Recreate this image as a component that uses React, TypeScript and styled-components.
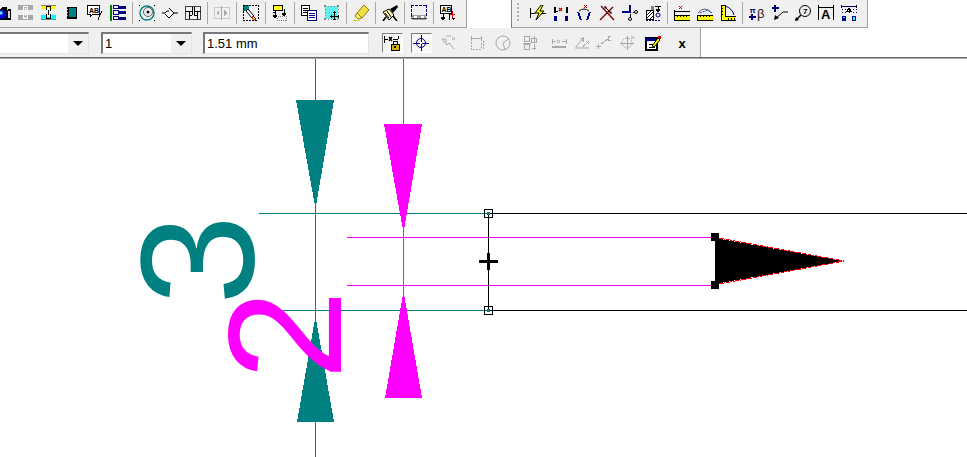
import React from "react";
import styled, { createGlobalStyle } from "styled-components";

const NAVY = "#000080";
const TEAL = "#008080";
const MAROON = "#800000";
const YELLOW = "#ffff00";
const CYAN = "#00ffff";
const OFF = "#a8a8a8";
const PINK = "#ff00ff";

const GlobalStyle = createGlobalStyle`
  html, body {
    margin: 0;
    padding: 0;
    background: #fff;
    overflow: hidden;
    font-family: "Liberation Sans", Arial, sans-serif;
  }
`;

const Page = styled.div`
  width: 967px;
  height: 457px;
  display: flex;
  flex-direction: column;
  overflow: hidden;
`;

const TopRow = styled.div`
  display: flex;
  height: 28px;
`;

const Toolbar = styled.div<{ $width: number }>`
  display: flex;
  align-items: center;
  width: ${(p) => p.$width}px;
  box-sizing: border-box;
  height: 100%;
  padding-bottom: 1px;
  background: #f0f0f0;
  border-bottom: 1px solid #a0a0a0;
  border-right: 1px solid #a0a0a0;
`;

const RightToolbar = styled(Toolbar)`
  margin-left: 44px;
  border-left: 1px solid #808080;
`;

const Grip = styled.div`
  width: 2px;
  height: 20px;
  margin: 0 7px 0 5px;
  background: repeating-linear-gradient(to bottom, #b0b0b0 0 2px, transparent 2px 4px);
`;

const Btn = styled.div<{ $width?: number }>`
  flex: none;
  width: ${(p) => p.$width ?? 23}px;
  height: 22px;
  display: flex;
  align-items: center;
  justify-content: center;
`;

const CutBtn = styled.div`
  flex: none;
  width: 14.5px;
  height: 22px;
  display: flex;
  align-items: center;
  justify-content: flex-end;
  padding-right: 3.5px;
  box-sizing: border-box;
  overflow: hidden;

  svg {
    flex: none;
  }
`;

const Sep = styled.div`
  flex: none;
  width: 6px;
  height: 22px;
  display: flex;
  justify-content: center;

  &::after {
    content: "";
    width: 1px;
    background: #a8a8a8;
  }
`;

const SecondRow = styled.div`
  width: 701px;
  height: 29px;
  box-sizing: border-box;
  padding-top: 1px;
  display: flex;
  align-items: center;
  background: #f0f0f0;
  border-right: 1px solid #a0a0a0;
`;

const Field = styled.div<{ $width: number; $gap: number }>`
  flex: none;
  width: ${(p) => p.$width}px;
  height: 22px;
  margin-left: ${(p) => p.$gap}px;
  box-sizing: border-box;
  display: flex;
  align-items: stretch;
  background: #fff;
  border-top: 2px solid #787878;
  border-left: 2px solid #787878;
  border-right: 1px solid #e4e4e4;
  border-bottom: 1px solid #e4e4e4;
  font-size: 13px;
  line-height: 18px;
  color: #000;
`;

const CutField = styled(Field)`
  border-left: none;
`;

const FieldText = styled.span`
  flex: 1;
  padding: 1px 0 0 2px;
  white-space: nowrap;
`;

const DropBtn = styled.div`
  flex: none;
  width: 20px;
  background: #f0f0f0;
  display: flex;
  align-items: center;
  justify-content: center;

  &::after {
    content: "";
    border-left: 5px solid transparent;
    border-right: 5px solid transparent;
    border-top: 5px solid #000;
  }
`;

const IconGroup = styled.div`
  display: flex;
  align-items: center;
  margin-left: 9px;
`;

const Toggled = styled.div`
  width: 21px;
  height: 20px;
  box-sizing: border-box;
  display: flex;
  align-items: center;
  justify-content: center;
  border-top: 1px solid #808080;
  border-left: 1px solid #808080;
  border-right: 1px solid #fff;
  border-bottom: 1px solid #fff;
  background: repeating-conic-gradient(#ffffff 0 25%, #f0f0f0 0 50%) 0 0 / 2px 2px;
`;

const CloseMark = styled.span`
  font-size: 13px;
  font-weight: 700;
  color: #000;
`;

const Canvas = styled.div`
  flex: 1;
  min-height: 0;
  padding-top: 1px;
  border-top: 1px solid #686868;
  box-shadow: inset 0 1px 0 #a8a8a8;
  background: #fff;

  svg {
    display: block;
  }
`;

const Ico = ({ children }: { children: React.ReactNode }) => (
  <svg width="16" height="16" viewBox="0 0 16 16" shapeRendering="crispEdges" fill="none">
    {children}
  </svg>
);

const Tiny = ({ x, y, size, color, weight, children }: { x: number; y: number; size: number; color?: string; weight?: number; children: React.ReactNode }) => (
  <text x={x} y={y} fontSize={size} fontFamily="'Liberation Sans', sans-serif" fontWeight={weight ?? 700} fill={color ?? "#000"}>
    {children}
  </text>
);

const icons: Record<string, React.ReactNode> = {
  camera: (
    <>
      <path d="M3 4h3l1-2h5l1 2h3v11H3z" fill="#000" />
      <path d="M12 3h1v2h-1zM13 6h2v7h-2z" fill="#d0d0d0" />
      <circle cx="7" cy="9.5" r="4.5" fill="#0000d0" shapeRendering="auto" />
      <circle cx="6" cy="8" r="1.8" fill="#60e0ff" shapeRendering="auto" />
    </>
  ),
  linkGrey: (
    <>
      <path d="M0 0h15v5H0zM0 10h15v5H0z" fill="#a8a8a8" />
      <path d="M5 1h5v6H9V2H6v5H5zM5 8h1v5h3V8h1v6H5zM7 4h1v7H7z" fill="#fff" />
      <path d="M6 3h3v1H6zM6 12h3v1H6z" fill="#d8d8d8" />
    </>
  ),
  linkColor: (
    <>
      <path d="M0 0h15v4H0z" fill={YELLOW} />
      <path d="M0 10h15v5H0z" fill={CYAN} />
      <path d="M0 0h15v1H0zM0 14h15v1H0z" fill="#808080" />
      <path d="M5 1h5v5H9V2H6v3H5zM5 9h1v4h3V9h1v5H5zM7 4h1v7H7z" fill="#000" />
      <path d="M6 3h3v2H6zM6 10h3v2H6z" fill="#fff" />
    </>
  ),
  book: (
    <>
      <path d="M3 2h10v12H3z" fill="#000" />
      <path d="M5 3h7v9H5z" fill={TEAL} />
      <path d="M3 4h1v1H3zM3 7h1v1H3zM3 10h1v1H3z" fill="#c0c0c0" />
    </>
  ),
  abNote: (
    <>
      <path d="M0.5 0.5h12v9h-7l-2 2v-2h-3z" fill="#fff" stroke="#000" />
      <Tiny x={2} y={7.5} size={7}>AB</Tiny>
      <path d="M14 6h1v2h-1zM13 8h1v2h-1zM12 10h1v2h-1zM11 12h1v3h-1z" fill="#000" />
    </>
  ),
  list: (
    <>
      <path d="M0 0h2v16H0z" fill="#008000" />
      <path d="M3.5 0.5h5v3h-5zM3.5 5.5h5v4h-5zM3.5 11.5h5v3h-5z" stroke={NAVY} />
      <path d="M9 1h7v3H9zM9 6h7v3H9zM9 12h7v3H9z" fill={NAVY} />
    </>
  ),
  disc: (
    <>
      <circle cx="8" cy="8" r="7" stroke={TEAL} strokeWidth="1.4" shapeRendering="auto" />
      <circle cx="9" cy="7" r="4.5" stroke="#606060" shapeRendering="auto" />
      <circle cx="9" cy="7" r="1.5" fill="#000" shapeRendering="auto" />
      <path d="M0 0h1v1H0zM15 0h1v1h-1zM0 15h1v1H0zM15 15h1v1h-1z" fill="#000" />
    </>
  ),
  diode: (
    <path d="M0 8h3l2-2h2M7 3l5 5-5 5-4-4M12 8h4" stroke="#000" shapeRendering="auto" />
  ),
  table: (
    <>
      <path d="M0.5 1.5h15v13h-15z" stroke="#404040" />
      <path d="M0 6h7M9 6h7M4 6v8M12 6v8M7 2v8M9 2v8M4 10h3M9 10h3" stroke="#000" />
    </>
  ),
  splitOff: (
    <>
      <path d="M0.5 2.5h15v11h-15z" stroke="#c8c8c8" />
      <path d="M7 1h1v14H7z" fill={OFF} />
      <path d="M5 5v6L2 8zM10 5v6l3-3z" fill={OFF} />
    </>
  ),
  pencilBox: (
    <>
      <path d="M0 0h6v6H0z" fill={TEAL} />
      <path d="M0 0h15M0 15h15M0 0v15M15 0v15" stroke="#000" strokeDasharray="2 1" />
      <path d="M5 4l6 7-2 2-6-7z" fill="#fff" stroke="#000" shapeRendering="auto" />
      <path d="M10 11l3 3-1 1-3-2z" fill={YELLOW} stroke="#c00000" shapeRendering="auto" />
    </>
  ),
  moveBox: (
    <>
      <path d="M1 0h9v5H1z" fill={YELLOW} stroke="#000" />
      <path d="M3 6v7M1 10h4l-2 3zM12 4v7M10 8h4l-2 3z" stroke="#000" />
      <path d="M1 7h3" stroke="#000" />
      <path d="M5.5 11.5h9v4h-9z" stroke="#808080" strokeDasharray="1 1" />
    </>
  ),
  copy: (
    <>
      <path d="M0.5 0.5h8v10h-8z" fill="#fff" stroke="#000" />
      <path d="M2 3h5M2 5h5M2 7h5" stroke="#000" />
      <path d="M6.5 5.5h9v10h-9z" fill="#fff" stroke={NAVY} />
      <path d="M8 8h6M8 10h6M8 12h6" stroke={NAVY} />
    </>
  ),
  hatchMove: (
    <>
      <path d="M1 1h13v13H1z" fill="#60f0f0" />
      <path d="M1 1h13M1 14h13M1 1v13M14 1v13" stroke="#808080" strokeDasharray="1 2" />
      <path d="M0 0h2v2H0zM13 0h2v2h-2zM0 13h2v2H0z" fill="#808080" />
      <path d="M10 6v9M6 11h9" stroke="#000" />
      <path d="M9 7h3M9 14h3M7 10v3M14 10v3" stroke="#000" />
    </>
  ),
  marker: (
    <>
      <path d="M4 8l7-8 5 5-7 8z" fill="#f0e040" stroke="#908000" shapeRendering="auto" />
      <path d="M4 8l5 5-4 1-3-3z" fill="#fff070" stroke="#908000" shapeRendering="auto" />
      <path d="M0 15h7v1H0z" fill="#e0d000" />
    </>
  ),
  brush: (
    <>
      <path d="M1 7l6-3 5 6-5 5z" fill="#fff8b0" stroke="#000" shapeRendering="auto" />
      <path d="M3 8l4 5M5 6l4 6" stroke="#000" shapeRendering="auto" />
      <path d="M8 4l7-4 1 2-5 6z" fill="#000" shapeRendering="auto" />
      <path d="M1 16l3-4M15 16l-4-5" stroke="#000" strokeWidth="1.6" shapeRendering="auto" />
    </>
  ),
  printBox: (
    <>
      <path d="M0 0h16M0 11h16M0 0v11M15 0v11" stroke={NAVY} strokeDasharray="3 1" />
      <path d="M1 10h14v5H1z" fill="#a0a0a0" />
      <path d="M3 11h3v3H3zM10 11h3v3h-3z" fill="#fff" />
      <path d="M0 13h16" stroke="#404040" />
    </>
  ),
  abArrows: (
    <>
      <path d="M0.5 0.5h11v8h-11z" fill="#fff" stroke="#000" />
      <Tiny x={1.5} y={7} size={7}>AB</Tiny>
      <path d="M3 9v4M1 12h4l-2 3zM9 9v6" stroke="#000" />
      <path d="M12 6h1v7h-1zM10 9h5v1h-5z" fill="#e00000" />
      <path d="M12 13h3l-1.5 2z" fill="#000" />
    </>
  ),
  lockDim: (
    <>
      <path d="M0 1v7M14 1v3M0 4h4M9 4h5" stroke="#000" />
      <path d="M5 2l3 4M8 2L5 6" stroke="#000" strokeWidth="1.4" shapeRendering="auto" />
      <path d="M9 6h4v3H9z" stroke="#000" />
      <path d="M7 9h8v6H7z" fill="#d0b000" stroke="#000" />
      <path d="M10 11h2v2h-2z" fill="#000" />
    </>
  ),
  target: (
    <>
      <circle cx="8" cy="8" r="4.5" stroke={NAVY} shapeRendering="auto" />
      <path d="M8 0v16M0 8h16" stroke={NAVY} />
      <path d="M7 7h2v2H7z" fill="#fff" />
    </>
  ),
  offArrow: (
    <>
      <path d="M1 4h4v4M1 4l5 6 2-2 5 6" stroke={OFF} shapeRendering="auto" />
      <path d="M11 2l3 3M14 2l-3 3M5 1h5" stroke={OFF} shapeRendering="auto" />
    </>
  ),
  offBox: (
    <>
      <path d="M2 1v5M12 1v5M2 3h10" stroke={OFF} />
      <path d="M2 7v7h10V7M14 6v9" stroke={OFF} strokeDasharray="2 1" />
    </>
  ),
  offDial: (
    <>
      <circle cx="8" cy="8" r="7" stroke={OFF} shapeRendering="auto" />
      <path d="M8 8l7-5M8 8l2 7" stroke={OFF} shapeRendering="auto" />
      <path d="M10 0h6v5" fill="#f0f0f0" />
    </>
  ),
  offRows: (
    <>
      <path d="M2.5 1.5h5v5h-5zM2.5 9.5h5v5h-5zM9 3h5v4H9z" stroke={OFF} />
      <path d="M12 1v6M1 8h8M12 9v6M10 13h4" stroke={OFF} />
    </>
  ),
  offDim: (
    <>
      <path d="M1 4v5M15 4v5M1 6h4M11 6h4M6 5l3 3M9 5L6 8" stroke={OFF} />
      <path d="M1 11h14v2H1z" fill={OFF} />
    </>
  ),
  offAngle: (
    <>
      <path d="M1 13h14M2 12l7-9" stroke={OFF} shapeRendering="auto" />
      <path d="M9 3l-2 1 2 2zM12 6l3 3M15 6l-3 3M9 12l2-3" stroke={OFF} />
    </>
  ),
  offPlus: (
    <>
      <path d="M1 11h5M3 9v5M6 9l7-5" stroke={OFF} />
      <path d="M13 1h3v4h-3z" stroke={OFF} />
    </>
  ),
  offCross: (
    <>
      <circle cx="8" cy="8" r="5" stroke={OFF} strokeDasharray="2 1" shapeRendering="auto" />
      <path d="M8 1v14M1 8h14M12 1l3 3M15 1l-3 3" stroke={OFF} />
    </>
  ),
  noteEdit: (
    <>
      <path d="M1 3h11v12H1z" fill="#fff" stroke="#000" strokeWidth="1.2" />
      <path d="M1 3h10v3H1z" fill={NAVY} />
      <path d="M4 9h4M4 12h6" stroke="#000" />
      <path d="M7 11l6-8 2 2-6 7z" fill={YELLOW} stroke="#000" shapeRendering="auto" />
      <path d="M13 1h3v3h-2z" fill="#e00000" />
    </>
  ),
  bolt: (
    <>
      <path d="M0 3v10M16 3v10M0 8h5M12 8h4" stroke="#000" />
      <path d="M11 0L5 8h4l-3 7 8-9h-4l3-6z" fill={YELLOW} stroke="#000" shapeRendering="auto" />
    </>
  ),
  dimNavy: (
    <>
      <path d="M1 2h2v6H1zM13 2h2v6h-2z" fill="#000" />
      <path d="M1 6h14" stroke="#000" strokeDasharray="4 8" />
      <path d="M6 3l3 3M9 3L6 6" stroke="#c00000" strokeWidth="1.2" shapeRendering="auto" />
      <path d="M1 11h3v5H1zM12 11h3v5h-3z" fill={NAVY} />
    </>
  ),
  angleNavy: (
    <>
      <path d="M1 7l3 8h2L3 7zM15 7l-3 8h-2l3-8z" fill={NAVY} />
      <path d="M3 6q5-4 10 0" stroke="#000" shapeRendering="auto" />
      <path d="M8 0l3 3M11 0L8 3" stroke="#c00000" shapeRendering="auto" />
    </>
  ),
  crossRed: (
    <>
      <path d="M1 15L14 2M2 1l13 14" stroke={MAROON} strokeWidth="1.4" shapeRendering="auto" />
      <path d="M6 2l6 6" stroke="#000" shapeRendering="auto" />
      <path d="M5 1l3 1-2 2zM13 9l-3-1 2-2z" fill="#000" shapeRendering="auto" />
    </>
  ),
  tee: (
    <>
      <path d="M0 6h9v2H0zM7 0h2v8H7z" fill={NAVY} />
      <circle cx="14" cy="7" r="1.5" stroke="#000" shapeRendering="auto" />
      <circle cx="8" cy="14" r="1.5" stroke="#000" shapeRendering="auto" />
      <path d="M8 9v3M11 7h1" stroke="#000" />
    </>
  ),
  hatchDim: (
    <>
      <path d="M1 5h7v9H1z" fill="#fff" stroke="#000" />
      <path d="M1 11l6-6M2 13l6-6M5 14l3-3" stroke="#000" shapeRendering="auto" />
      <path d="M6 1h3v4H6z" fill="#808080" />
      <path d="M10 1h6M13 1v5M11 4h4l-2 3z" stroke="#000" />
      <circle cx="13" cy="10" r="2" stroke={NAVY} shapeRendering="auto" />
      <path d="M1 15h14" stroke={NAVY} strokeDasharray="2 1" />
    </>
  ),
  rulerX: (
    <>
      <path d="M5 1l3 3M8 1L5 4" stroke="#a00000" />
      <path d="M0 6h16" stroke="#000" />
      <path d="M0 5v5M16 5v5" stroke="#000" />
      <path d="M0 10h16v5H0z" fill={YELLOW} stroke="#000" />
      <path d="M3 10v2M6 10v2M9 10v2M12 10v2" stroke="#000" />
    </>
  ),
  rulerArc: (
    <>
      <path d="M1 8q6-8 14 0" stroke="#606060" shapeRendering="auto" />
      <path d="M3 8l8-3 3 3" stroke="#0040c0" shapeRendering="auto" strokeDasharray="2 1" />
      <path d="M0 10h16v5H0z" fill={YELLOW} stroke="#000" />
      <path d="M3 10v2M6 10v2M9 10v2M12 10v2" stroke="#000" />
    </>
  ),
  rulerL: (
    <>
      <path d="M1 0h4v11h11v4H1z" fill={YELLOW} stroke="#000" />
      <path d="M5 1q7 2 9 9" stroke={NAVY} shapeRendering="auto" />
      <path d="M1 3h2M1 6h2M1 9h2M8 15v-2M11 15v-2M14 15v-2" stroke="#000" />
    </>
  ),
  piBeta: (
    <>
      <Tiny x={0.5} y={8} size={8} color={NAVY}>π</Tiny>
      <path d="M3 9v6M0 12h7" stroke={NAVY} strokeWidth="2" />
      <Tiny x={8} y={13} size={13} weight={400} color="#202020">β</Tiny>
    </>
  ),
  plusLine: (
    <>
      <path d="M3 0v7M0 3h7" stroke={NAVY} strokeWidth="2" />
      <path d="M3 14l8-7h5" stroke="#000" shapeRendering="auto" />
      <path d="M2 15l1-5 4 3z" fill="#000" shapeRendering="auto" />
    </>
  ),
  query: (
    <>
      <circle cx="10" cy="6" r="5.5" stroke="#000" shapeRendering="auto" />
      <Tiny x={8} y={9} size={8}>7</Tiny>
      <path d="M6 10l-5 5" stroke="#000" strokeWidth="1.4" shapeRendering="auto" />
      <path d="M0 16l1-4 3 3z" fill="#000" shapeRendering="auto" />
    </>
  ),
  textA: (
    <>
      <path d="M0 0v15M15 0v15M0 2h15" stroke="#000" />
      <Tiny x={3} y={14} size={13} weight={700}>A</Tiny>
    </>
  ),
  navyBars: (
    <>
      <path d="M0 1h16" stroke={NAVY} />
      <path d="M0 0v3M15 0v3" stroke="#000" />
      <path d="M1 11h4v5H1zM11 11h4v5h-4z" fill={NAVY} />
      <path d="M12 12h2v3h-2z" fill={CYAN} />
      <path d="M2 12h2v1H2z" fill={CYAN} />
      <path d="M8 3v5M6 6h4L8 3z" stroke="#000" />
      <path d="M1 4v6M15 4v6M4 4v6M12 4v6" stroke={NAVY} strokeDasharray="1 2" />
    </>
  ),
};

type Item = string | null;

// null = separator
const leftItems: Item[] = [
  "linkGrey", "linkColor", "book", "abNote", "list", null,
  "disc", "diode", "table", null,
  "splitOff", null,
  "pencilBox", null,
  "moveBox", null,
  "copy", "hatchMove", null,
  "marker", null,
  "brush", null,
  "printBox", null,
  "abArrows",
];

const rightItems: Item[] = [
  "bolt", "dimNavy", "angleNavy", "crossRed", "tee", "hatchDim", null,
  "rulerX", "rulerArc", "rulerL", null,
  "piBeta", "plusLine", "query", "textA", "navyBars",
];

const snapItems = [
  { name: "lockDim", width: 28, toggled: true },
  { name: "target", width: 30, toggled: true },
  { name: "offArrow", width: 26 },
  { name: "offBox", width: 30 },
  { name: "offDial", width: 22 },
  { name: "offRows", width: 32 },
  { name: "offDim", width: 26 },
  { name: "offAngle", width: 20 },
  { name: "offPlus", width: 22 },
  { name: "offCross", width: 26 },
  { name: "noteEdit", width: 26 },
];

const renderItems = (items: Item[]) =>
  items.map((item, i) =>
    item === null ? (
      <Sep key={i} />
    ) : (
      <Btn key={i}>
        <Ico>{icons[item]}</Ico>
      </Btn>
    )
  );

const Drawing = () => (
  <svg width="967" height="398" viewBox="0 59 967 398" shapeRendering="crispEdges">
    {/* teal pin */}
    <line x1="315.5" y1="59" x2="315.5" y2="457" stroke={TEAL} />
    <line x1="259" y1="213.5" x2="488" y2="213.5" stroke={TEAL} />
    <line x1="283" y1="310.5" x2="488" y2="310.5" stroke={TEAL} />
    <polygon points="296,100 334,100 315.5,209" fill={TEAL} />
    <polygon points="297,422 334,422 315.5,316" fill={TEAL} />

    {/* magenta pin */}
    <line x1="403.5" y1="59" x2="403.5" y2="292" stroke={PINK} />
    <line x1="347" y1="237.5" x2="715" y2="237.5" stroke={PINK} />
    <line x1="347" y1="285.5" x2="715" y2="285.5" stroke={PINK} />
    <polygon points="384,124 422,124 403.5,233" fill={PINK} />
    <polygon points="385,398 422,398 403.5,291" fill={PINK} />

    {/* pin numbers */}
    <text
      transform="translate(253 305) rotate(-90)"
      fontSize="162"
      fontFamily="'Liberation Sans', sans-serif"
      fill={TEAL}
    >
      3
    </text>
    <text
      transform="translate(341 380) rotate(-90)"
      fontSize="162"
      fontFamily="'Liberation Sans', sans-serif"
      fill={PINK}
    >
      2
    </text>

    {/* selection */}
    <line x1="488.5" y1="213" x2="488.5" y2="311" stroke="#000" />
    <line x1="488" y1="213.5" x2="967" y2="213.5" stroke="#000" />
    <line x1="488" y1="310.5" x2="967" y2="310.5" stroke="#000" />
    <rect x="484.5" y="209.5" width="8" height="8" fill="none" stroke="#000" />
    <rect x="484.5" y="306.5" width="8" height="8" fill="none" stroke="#000" />
    <rect x="487" y="212" width="3" height="3" fill={TEAL} />
    <rect x="487" y="309" width="3" height="3" fill={TEAL} />
    <rect x="479" y="260" width="19" height="3" fill="#000" />
    <rect x="487" y="253" width="3" height="17" fill="#000" />

    {/* arrow */}
    <polygon points="715,238 843,261 715,284" fill="#000" />
    <line x1="719" y1="238" x2="844" y2="261" stroke="#ff0000" strokeDasharray="6 1" />
    <line x1="719" y1="284" x2="844" y2="261" stroke="#ff0000" strokeDasharray="6 1" />
    <rect x="711" y="233" width="8" height="8" fill="#000" />
    <rect x="711" y="281" width="8" height="8" fill="#000" />
  </svg>
);

export default function App() {
  return (
    <Page>
      <GlobalStyle />
      <TopRow>
        <Toolbar $width={467}>
          <CutBtn>
            <Ico>{icons.camera}</Ico>
          </CutBtn>
          {renderItems(leftItems)}
        </Toolbar>
        <RightToolbar $width={357}>
          <Grip />
          {renderItems(rightItems)}
        </RightToolbar>
      </TopRow>
      <SecondRow>
        <CutField $width={89} $gap={0}>
          <FieldText />
          <DropBtn />
        </CutField>
        <Field $width={91} $gap={12}>
          <FieldText>1</FieldText>
          <DropBtn />
        </Field>
        <Field $width={166} $gap={11}>
          <FieldText>1.51 mm</FieldText>
        </Field>
        <IconGroup>
          {snapItems.map((item) => (
            <Btn key={item.name} $width={item.width}>
              {item.toggled ? (
                <Toggled>
                  <Ico>{icons[item.name]}</Ico>
                </Toggled>
              ) : (
                <Ico>{icons[item.name]}</Ico>
              )}
            </Btn>
          ))}
          <Btn $width={32}>
            <CloseMark>x</CloseMark>
          </Btn>
        </IconGroup>
      </SecondRow>
      <Canvas>
        <Drawing />
      </Canvas>
    </Page>
  );
}
